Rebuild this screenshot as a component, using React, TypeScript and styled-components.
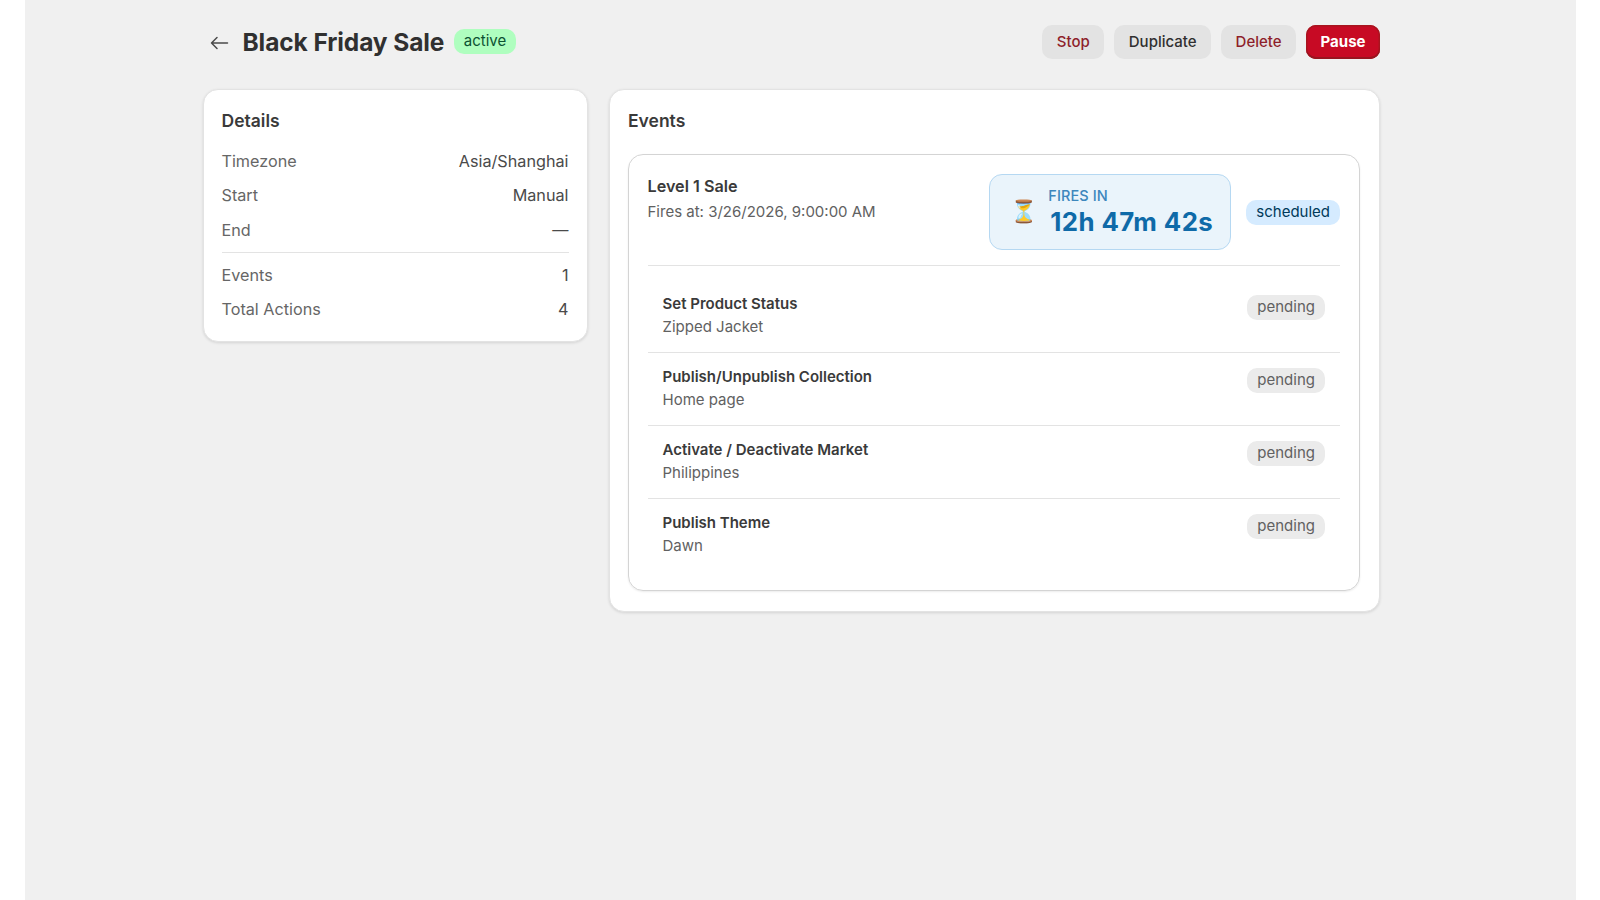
import styled, { createGlobalStyle } from 'styled-components';

const GlobalStyle = createGlobalStyle`
  html, body { margin: 0; padding: 0; background: #ffffff; }
  body { font-family: Inter, "Noto Sans", sans-serif; color: #303030; }
`;

const Page = styled.div`
  width: 1551px;
  height: 100vh;
  margin-left: 25px;
  background: #f0f0f0;
  padding: 25px 196px 0 177.5px;
  box-sizing: border-box;
`;

const Header = styled.header`
  display: flex;
  align-items: center;
  justify-content: space-between;
  height: 34px;
  margin-bottom: 30px;
`;

const TitleGroup = styled.div`
  display: flex;
  align-items: center;
  margin-top: -1px;
`;

const Back = styled.span`
  display: flex;
  margin: 2px 13.5px 0 6.5px;
  color: #4a4a4a;
`;

const Title = styled.h1`
  margin: 0 9.5px 0 0;
  font-size: 24.5px;
  line-height: 32px;
  font-weight: 650;
  letter-spacing: -0.1px;
`;

const Badge = styled.span<{ $tone: 'active' | 'scheduled' | 'pending' }>`
  font-size: 15px;
  line-height: 23.5px;
  border-radius: 10px;
  padding: 0 10px 1.5px;
  background: ${(p) => ({ active: '#affebf', scheduled: '#d5ebff', pending: '#ebebeb' })[p.$tone]};
  color: ${(p) => ({ active: '#0c5132', scheduled: '#003a5a', pending: '#616161' })[p.$tone]};
`;

const PendingBadge = styled(Badge)`
  margin-top: 2.5px;
`;

const Actions = styled.div`
  display: flex;
  gap: 10px;
`;

const Button = styled.button<{ $color?: string }>`
  height: 34px;
  padding: 0 14.5px 2px;
  border: 0;
  border-radius: 10px;
  background: #e3e3e3;
  color: ${(p) => p.$color ?? '#303030'};
  font: 550 15px Inter, sans-serif;
`;

const PrimaryButton = styled(Button)`
  background: #c70a24;
  color: #fff;
  font-weight: 650;
  box-shadow: inset 0 -2px 0 #98141f, inset 0 0 0 1.5px #a8151f;
`;

const Columns = styled.div`
  display: grid;
  grid-template-columns: 385px 771.5px;
  gap: 21px;
  align-items: start;
`;

const Card = styled.section<{ $wide?: boolean }>`
  background: #fff;
  border: 1px solid #e3e3e3;
  border-radius: 15px;
  box-shadow: 0 1px 3px rgba(0, 0, 0, 0.12);
  padding: 19px ${(p) => (p.$wide ? '19px' : '18px')} 20px ${(p) => (p.$wide ? '18.5px' : '18px')};
  box-sizing: border-box;
`;

const CardTitle = styled.h2`
  margin: 0 0 16px;
  font-size: 17.5px;
  line-height: 24px;
  font-weight: 600;
  color: #3a3a3a;
`;

const Row = styled.div`
  display: flex;
  justify-content: space-between;
  font-size: 16.2px;
  line-height: 24px;
  margin-bottom: 10.3px;
  color: #4a4a4a;
  &:last-child { margin-bottom: 0; }
`;

const Label = styled.span`
  color: #666666;
`;

const Rule = styled.hr`
  border: 0;
  border-top: 1px solid #e3e3e3;
  margin: 2px 0 10px;
`;

const EventCard = styled.div`
  margin-top: 21px;
  border: 1px solid #d4d4d4;
  border-radius: 15px;
  padding: 19px 19px 19px 18.5px;
  box-shadow: 0 1px 2px rgba(0, 0, 0, 0.08);
`;

const EventHead = styled.div`
  display: flex;
  align-items: flex-start;
  justify-content: space-between;
  padding-bottom: 15px;
  border-bottom: 1px solid #e3e3e3;
`;

const EventName = styled.div`
  font-size: 16.2px;
  line-height: 24px;
  font-weight: 600;
  color: #3a3a3a;
  margin-bottom: 2px;
`;

const Sub = styled.div`
  font-size: 15px;
  line-height: 23px;
  color: #616161;
`;

const EventRight = styled.div`
  display: flex;
  align-items: center;
  gap: 15px;
`;

const Countdown = styled.div`
  width: 242px;
  height: 76px;
  box-sizing: border-box;
  display: flex;
  align-items: center;
  gap: 16px;
  padding-left: 20px;
  background: #eaf4fb;
  border: 1px solid #b5d8f2;
  border-radius: 13px;
`;

const Hourglass = styled.span`
  width: 22px;
  text-align: center;
  font-size: 22px;
  line-height: 1;
  font-family: "Noto Color Emoji", "DejaVu Sans", sans-serif;
`;

const CountdownText = styled.div`
  padding-top: 3px;
`;

const FiresIn = styled.div`
  font-size: 14.5px;
  line-height: 17px;
  font-weight: 500;
  color: #3d87bd;
  letter-spacing: 0.1px;
`;

const Timer = styled.div`
  font-size: 25.8px;
  line-height: 36px;
  font-weight: 650;
  color: #0f6aa8;
  letter-spacing: 0.4px;
  margin-left: 2px;
`;

const ActionList = styled.div`
  padding-top: 14px;
`;

const ActionRow = styled.div`
  display: flex;
  justify-content: space-between;
  align-items: flex-start;
  padding: 12px 15px 14px;
  border-bottom: 1px solid #e3e3e3;
  &:last-child { border-bottom: 0; }
`;

const ActionName = styled.div`
  font-size: 15px;
  line-height: 23px;
  font-weight: 600;
  color: #3a3a3a;
`;

const actions = [
  ['Set Product Status', 'Zipped Jacket'],
  ['Publish/Unpublish Collection', 'Home page'],
  ['Activate / Deactivate Market', 'Philippines'],
  ['Publish Theme', 'Dawn'],
];

export default function App() {
  return (
    <>
      <GlobalStyle />
      <Page>
        <Header>
          <TitleGroup>
            <Back>
              <svg width="20" height="20" viewBox="0 0 20 20" fill="none" stroke="currentColor" strokeWidth="1.5" strokeLinecap="round" strokeLinejoin="round">
                <path d="M18.5 10H2.5M8 4.5L2.5 10l5.5 5.5" />
              </svg>
            </Back>
            <Title>Black Friday Sale</Title>
            <Badge $tone="active">active</Badge>
          </TitleGroup>
          <Actions>
            <Button $color="#8e1f2b">Stop</Button>
            <Button>Duplicate</Button>
            <Button $color="#8e1f2b">Delete</Button>
            <PrimaryButton>Pause</PrimaryButton>
          </Actions>
        </Header>
        <Columns>
          <Card>
            <CardTitle>Details</CardTitle>
            <Row><Label>Timezone</Label><span>Asia/Shanghai</span></Row>
            <Row><Label>Start</Label><span>Manual</span></Row>
            <Row><Label>End</Label><span>—</span></Row>
            <Rule />
            <Row><Label>Events</Label><span>1</span></Row>
            <Row><Label>Total Actions</Label><span>4</span></Row>
          </Card>
          <Card $wide>
            <CardTitle>Events</CardTitle>
            <EventCard>
              <EventHead>
                <div>
                  <EventName>Level 1 Sale</EventName>
                  <Sub>Fires at: 3/26/2026, 9:00:00 AM</Sub>
                </div>
                <EventRight>
                  <Countdown>
                    <Hourglass>⏳</Hourglass>
                    <CountdownText>
                      <FiresIn>FIRES IN</FiresIn>
                      <Timer>12h 47m 42s</Timer>
                    </CountdownText>
                  </Countdown>
                  <Badge $tone="scheduled">scheduled</Badge>
                </EventRight>
              </EventHead>
              <ActionList>
                {actions.map(([name, target]) => (
                  <ActionRow key={name}>
                    <div>
                      <ActionName>{name}</ActionName>
                      <Sub>{target}</Sub>
                    </div>
                    <PendingBadge $tone="pending">pending</PendingBadge>
                  </ActionRow>
                ))}
              </ActionList>
            </EventCard>
          </Card>
        </Columns>
      </Page>
    </>
  );
}
